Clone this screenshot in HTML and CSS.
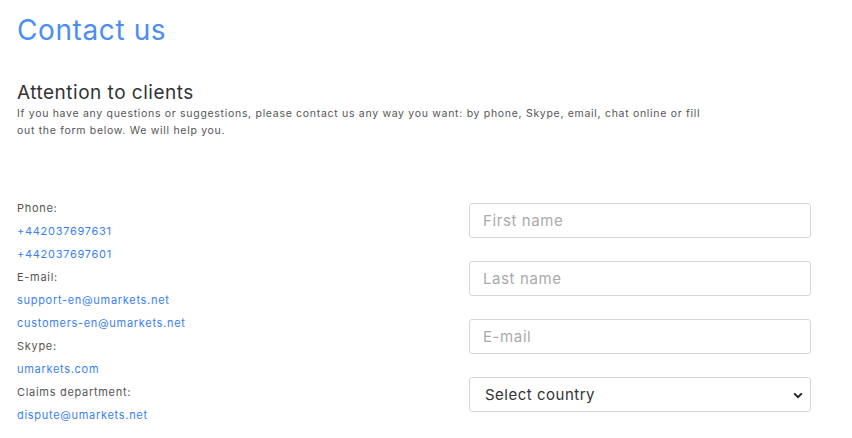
FILE: index.html
```html
<!DOCTYPE html>
<html lang="en">
<head>
<meta charset="utf-8">
<title>Contact us</title>
<link rel="stylesheet" href="styles.css">
</head>
<body>
<main class="page">
  <h1 class="title">Contact us</h1>
  <section class="intro">
    <h2 class="subtitle">Attention to clients</h2>
    <p class="lead">If you have any questions or suggestions, please contact us any way you want: by phone, Skype, email, chat online or fill out the form below. We will help you.</p>
  </section>
  <section class="content">
    <ul class="contacts">
      <li class="label">Phone:</li>
      <li><a class="link" href="#">+442037697631</a></li>
      <li><a class="link" href="#">+442037697601</a></li>
      <li class="label">E-mail:</li>
      <li><a class="link" href="#">support-en@umarkets.net</a></li>
      <li><a class="link" href="#">customers-en@umarkets.net</a></li>
      <li class="label">Skype:</li>
      <li><a class="link" href="#">umarkets.com</a></li>
      <li class="label">Claims department:</li>
      <li><a class="link" href="#">dispute@umarkets.net</a></li>
    </ul>
    <form class="form">
      <input class="field" type="text" placeholder="First name">
      <input class="field" type="text" placeholder="Last name">
      <input class="field" type="email" placeholder="E-mail">
      <div class="select-wrap">
        <select class="field select">
          <option>Select country</option>
        </select>
        <svg class="chevron" width="10" height="7" viewBox="0 0 10 7"><path d="M1.2 1.4 5 5.2 8.8 1.4" fill="none" stroke="#222" stroke-width="2"/></svg>
      </div>
    </form>
  </section>
</main>
</body>
</html>
```
FILE: styles.css
```css
* { box-sizing: border-box; }
html, body { margin: 0; padding: 0; background: #fff; }
body { font-family: Inter, "Noto Sans", sans-serif; color: #444; }
.page { width: 811px; padding: 12px 0 0 17px; }
.title {
  margin: 0;
  font-size: 28px;
  font-weight: 400;
  line-height: 36px;
  letter-spacing: 0.6px;
  color: #4a8ef2;
}
.intro { margin-top: 33px; }
.subtitle {
  margin: 0;
  font-size: 19px;
  font-weight: 400;
  line-height: 24px;
  letter-spacing: 0.5px;
  color: #333;
}
.lead {
  margin: 0;
  max-width: 700px;
  font-size: 10.5px;
  line-height: 17px;
  letter-spacing: 0.7px;
  color: #555;
}
.content {
  margin-top: 58px;
  display: grid;
  grid-template-columns: 1fr 342px;
  align-items: start;
}
.contacts {
  list-style: none;
  margin: 0;
  padding: 0;
  font-size: 11px;
  line-height: 23px;
  letter-spacing: 0.7px;
}
.label { color: #555; }
.link { color: #3a7ff0; text-decoration: none; }
.form {
  display: flex;
  flex-direction: column;
  gap: 23px;
  padding-top: 6px;
}
.field {
  width: 342px;
  height: 35px;
  border: 1px solid #d6d6d6;
  border-radius: 3px;
  padding: 0 13px;
  font-family: inherit;
  font-size: 15px;
  letter-spacing: 0.6px;
  color: #333;
  background: #fff;
  outline: none;
}
.field::placeholder { color: #aaa; }
.select-wrap { position: relative; }
.select {
  appearance: none;
  -webkit-appearance: none;
  padding: 0 15px;
  font-size: 15px;
  letter-spacing: 0.5px;
  color: #333;
}
.chevron { position: absolute; right: 8px; top: 15px; pointer-events: none; }
```
